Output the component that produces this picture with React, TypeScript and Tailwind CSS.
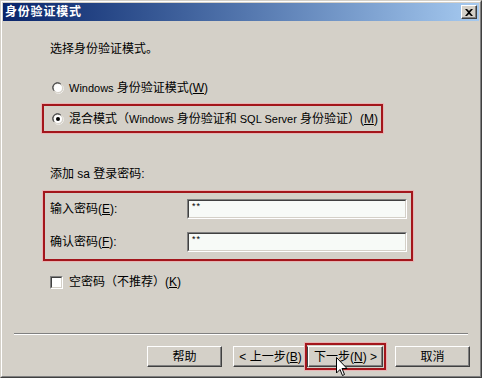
import React from "react";

const FONT = "font-['Liberation_Sans','Noto_Sans_CJK_SC',sans-serif]";

function Radio({ checked }: { checked?: boolean }) {
  return (
    <svg width="12" height="12" viewBox="0 0 12 12" className="shrink-0">
      <path d="M1.5 8.5 A5 5 0 0 1 8.5 1.5" stroke="#808080" strokeWidth="1" fill="none" />
      <path d="M2.3 8.9 A4.2 4.2 0 0 1 8.9 2.3" stroke="#404040" strokeWidth="1" fill="none" />
      <circle cx="6" cy="6" r="4" fill="#ffffff" />
      <path d="M10.5 3.5 A5 5 0 0 1 3.5 10.5" stroke="#ffffff" strokeWidth="1" fill="none" />
      <path d="M9.7 3.1 A4.2 4.2 0 0 1 3.1 9.7" stroke="#d4d0c8" strokeWidth="1" fill="none" />
      {checked && <circle cx="6" cy="6" r="2" fill="#000000" />}
    </svg>
  );
}

function Btn({ children, className = "" }: { children: React.ReactNode; className?: string }) {
  return (
    <div
      className={`h-[21px] w-[75px] bg-[#d4d0c8] flex items-center justify-center text-[12px] text-black border border-t-white border-l-white border-r-[#404040] border-b-[#404040] shadow-[inset_-1px_-1px_0_#808080] ${className}`}
    >
      {children}
    </div>
  );
}

function Field() {
  return (
    <div className="h-[20px] w-[220px] border border-t-[#808080] border-l-[#808080] border-r-white border-b-white">
      <div className="h-full w-full bg-[#f7faf7] border border-t-[#404040] border-l-[#404040] border-r-[#d4d0c8] border-b-[#d4d0c8] text-[9px] leading-[9px] pl-[3px] pt-[1px] tracking-[1px]">
        **
      </div>
    </div>
  );
}

export default function App() {
  return (
    <div className={`w-[482px] h-[378px] bg-[#d4d0c8] ${FONT} relative overflow-hidden`}>
      <div className="w-full h-full border border-t-[#d4d0c8] border-l-[#d4d0c8] border-r-[#404040] border-b-[#404040]">
        <div className="w-full h-full border border-t-white border-l-white border-r-[#808080] border-b-[#808080] p-[1px] flex flex-col">
          {/* title bar */}
          <div className="h-[18px] bg-gradient-to-r from-[#0a246a] to-[#a6caf0] flex items-center pl-[2px] pr-[2px]">
            <span className="text-white font-bold text-[12px] tracking-[0.8px] leading-none">身份验证模式</span>
            <div className="ml-auto w-[16px] h-[14px] bg-[#d4d0c8] border border-t-white border-l-white border-r-[#404040] border-b-[#404040] shadow-[inset_-1px_-1px_0_#808080] flex items-center justify-center">
              <svg width="8" height="7" viewBox="0 0 8 7">
                <path d="M0 0 L2 0 L4 2 L6 0 L8 0 L5 3.5 L8 7 L6 7 L4 5 L2 7 L0 7 L3 3.5 Z" fill="#000" />
              </svg>
            </div>
          </div>

          {/* body */}
          <div className="flex-1 flex flex-col text-[12px] text-black">
            <div className="pl-[47px] mt-[20px] h-[16px] leading-[16px]">选择身份验证模式。</div>

            <div className="pl-[49px] mt-[23px] h-[16px] flex items-center gap-[5px]">
              <Radio />
              <span className="leading-[16px]">
                <span className="text-[11px]">Windows </span>身份验证模式(<span className="underline">W</span>)
              </span>
            </div>

            <div className="ml-[39px] mt-[8px] w-[341px] h-[29px] border-2 border-[#a3161c] shadow-[0_0_0_1px_#e8b4b4] flex items-center pl-[8px] gap-[5px]">
              <Radio checked />
              <span className="leading-[16px] whitespace-nowrap">
                混合模式（<span className="text-[11px]">Windows </span>身份验证和<span className="text-[11px]"> SQL Server </span>身份验证）(<span className="underline">M</span>)
              </span>
            </div>

            <div className="pl-[47px] mt-[33px] h-[16px] leading-[16px]">添加 sa 登录密码:</div>

            <div className="ml-[40px] mt-[9px] w-[370px] h-[70px] border-2 border-[#a3161c] shadow-[0_0_0_1px_#e8b4b4] flex flex-col pl-[5px] pt-[6px] gap-[13px]">
              <div className="flex items-center">
                <span className="w-[137px] leading-[16px]">
                  输入密码(<span className="underline">E</span>):
                </span>
                <Field />
              </div>
              <div className="flex items-center">
                <span className="w-[137px] leading-[16px]">
                  确认密码(<span className="underline">F</span>):
                </span>
                <Field />
              </div>
            </div>

            <div className="pl-[47px] mt-[13px] h-[16px] flex items-center gap-[6px]">
              <div className="w-[13px] h-[13px] border border-t-[#808080] border-l-[#808080] border-r-white border-b-white">
                <div className="w-full h-full bg-white border border-t-[#404040] border-l-[#404040] border-r-[#d4d0c8] border-b-[#d4d0c8]" />
              </div>
              <span className="leading-[16px]">
                空密码（不推荐）(<span className="underline">K</span>)
              </span>
            </div>

            <div className="mx-[11px] mt-[43px] h-[2px] border-t border-t-[#808080] border-b border-b-white" />

            <div className="mt-[11px] flex items-center pl-[144px]">
              <Btn>帮助</Btn>
              <Btn className="ml-[11px]">
                &lt; 上一步(<span className="underline">B</span>)
              </Btn>
              <div className="ml-[-3px] border-2 border-[#a3161c] shadow-[0_0_0_1px_#e8b4b4] -my-[3px] p-[1px]">
                <Btn className="w-[72px]">
                  下一步(<span className="underline">N</span>) &gt;
                </Btn>
              </div>
              <Btn className="ml-[9px]">取消</Btn>
            </div>
          </div>
        </div>
      </div>

      {/* mouse cursor */}
      <svg className="absolute left-[336px] top-[357px]" width="12" height="21" viewBox="0 0 12 21">
        <path d="M0.5 0.5 L0.5 16 L4 12.5 L6.5 18.5 L8.5 17.5 L6 11.5 L11 11.5 Z" fill="#ffffff" stroke="#000000" strokeWidth="1" />
      </svg>
    </div>
  );
}
